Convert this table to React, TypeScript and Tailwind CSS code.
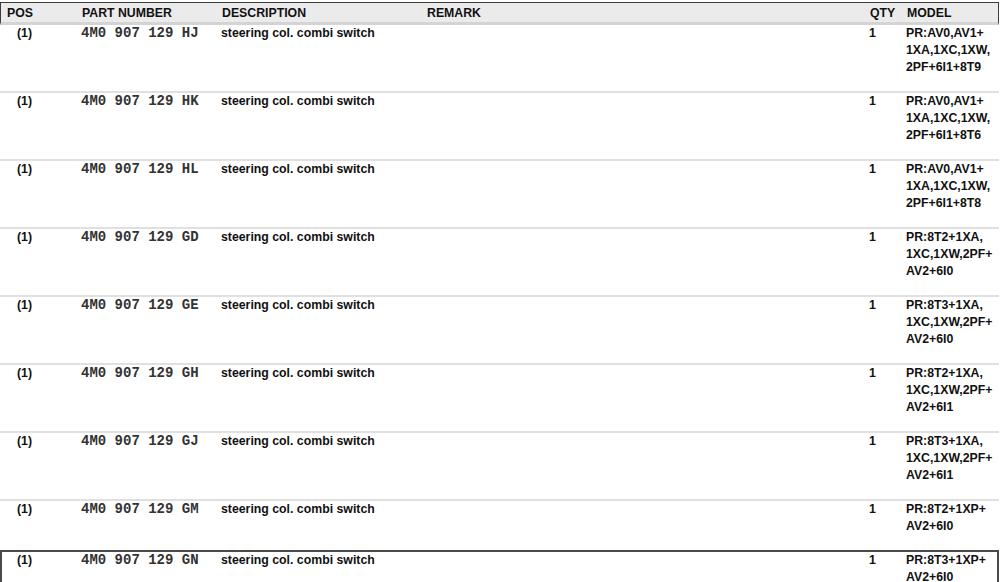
import React from "react";

type Row = { part: string; model: string[] };

const rows: Row[] = [
  { part: "4M0 907 129 HJ", model: ["PR:AV0,AV1+", "1XA,1XC,1XW,", "2PF+6I1+8T9"] },
  { part: "4M0 907 129 HK", model: ["PR:AV0,AV1+", "1XA,1XC,1XW,", "2PF+6I1+8T6"] },
  { part: "4M0 907 129 HL", model: ["PR:AV0,AV1+", "1XA,1XC,1XW,", "2PF+6I1+8T8"] },
  { part: "4M0 907 129 GD", model: ["PR:8T2+1XA,", "1XC,1XW,2PF+", "AV2+6I0"] },
  { part: "4M0 907 129 GE", model: ["PR:8T3+1XA,", "1XC,1XW,2PF+", "AV2+6I0"] },
  { part: "4M0 907 129 GH", model: ["PR:8T2+1XA,", "1XC,1XW,2PF+", "AV2+6I1"] },
  { part: "4M0 907 129 GJ", model: ["PR:8T3+1XA,", "1XC,1XW,2PF+", "AV2+6I1"] },
  { part: "4M0 907 129 GM", model: ["PR:8T2+1XP+", "AV2+6I0"] },
  { part: "4M0 907 129 GN", model: ["PR:8T3+1XP+", "AV2+6I0"] },
];

const cols = "grid-cols-[81px_140px_205px_443px_37px_1fr]";
const colsSel = "grid-cols-[79px_140px_205px_443px_37px_1fr]";

export default function App() {
  return (
    <div
      className="h-[582px] w-[1000px] overflow-hidden bg-white pt-[2px] text-[12.3px] font-bold text-[#111]"
      style={{ fontFamily: '"Liberation Sans", Arial, sans-serif' }}
    >
      <div
        className={`grid ${cols} w-[999px] border-x border-t border-[#3c3c3c] border-b-[3px] border-b-[#d4d4d4] bg-[#ebebeb] pt-px leading-[18px]`}
      >
        <div className="pl-[6px]">POS</div>
        <div>PART NUMBER</div>
        <div>DESCRIPTION</div>
        <div>REMARK</div>
        <div>QTY</div>
        <div>MODEL</div>
      </div>
      {rows.map((r, i) => {
        const selected = i === rows.length - 1;
        const beforeSelected = i === rows.length - 2;
        return (
          <div
            key={i}
            className={`grid ${selected ? colsSel : cols} w-[999px] pb-[15px] leading-[17px] ${
              selected
                ? "border-2 border-[#4a4a4a]"
                : beforeSelected
                ? ""
                : "border-b-2 border-[#e0e0e0]"
            }`}
          >
            <div className={selected ? "pl-[15px]" : "pl-[17px]"}>(1)</div>
            <div
              className="whitespace-pre text-[14px] font-bold text-[#333]"
              style={{ fontFamily: '"Liberation Mono", "Courier New", monospace' }}
            >
              {r.part}
            </div>
            <div>steering col. combi switch</div>
            <div></div>
            <div>1</div>
            <div>
              {r.model.map((m, j) => (
                <div key={j}>{m}</div>
              ))}
            </div>
          </div>
        );
      })}
    </div>
  );
}
